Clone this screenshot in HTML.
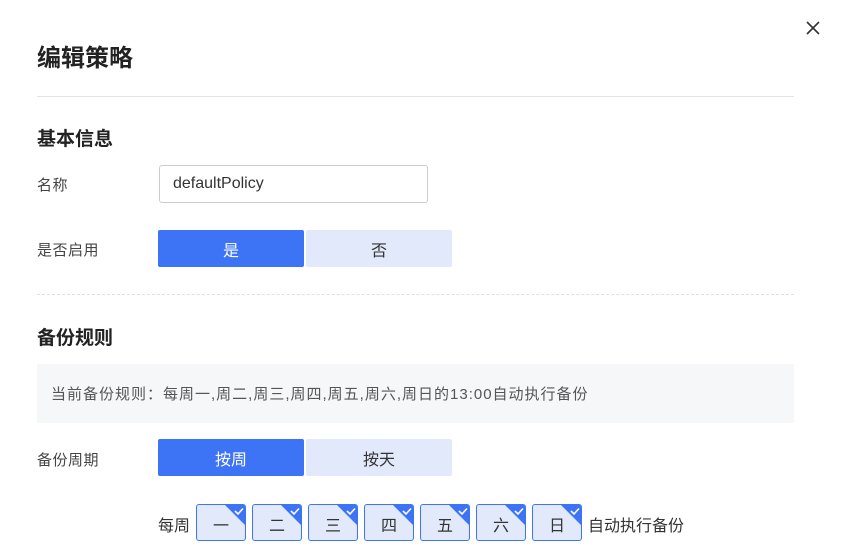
<!DOCTYPE html>
<html><head><meta charset="utf-8"><style>
*{margin:0;padding:0;box-sizing:border-box}
body{width:844px;height:557px;background:#fff;font-family:"Liberation Sans","Noto Sans CJK SC",sans-serif;color:#333;position:relative;overflow:hidden}
.a{position:absolute}
.t{font-size:24px;font-weight:bold;left:37px;top:38px;color:#222}
.h{font-size:19px;font-weight:bold;color:#222;left:37px}
.l{font-size:15px;color:#444;left:37px;letter-spacing:0.5px}
.btn{position:absolute;height:37px;display:flex;align-items:center;justify-content:center;font-size:16px;border-radius:2px}
.on{background:#3d74f5;color:#fff}
.off{background:#e2e9fb;color:#333}
.d{position:absolute;top:504px;width:50px;height:37px;border:1px solid #3d74f5;border-radius:3px;background:#e2e9fb;display:flex;align-items:center;justify-content:center;font-size:16px;color:#333;overflow:hidden;padding-top:2px}
.d svg{position:absolute;right:0;top:0}
</style></head><body>
<svg class="a" style="left:805px;top:20px" width="16" height="16" viewBox="0 0 16 16"><path d="M2 2L14 14M14 2L2 14" stroke="#333" stroke-width="1.6"/></svg>
<div class="a t">编辑策略</div>
<div class="a" style="left:37px;top:96px;width:757px;height:1px;background:#e4e4e4"></div>
<div class="a h" style="top:124px">基本信息</div>
<div class="a l" style="top:174px">名称</div>
<div class="a" style="left:159px;top:165px;width:269px;height:38px;border:1px solid #ccc;border-radius:3px;font-size:16px;padding:9px 0 0 13px;color:#333">defaultPolicy</div>
<div class="a l" style="top:239px">是否启用</div>
<div class="btn on" style="left:158px;top:230px;width:146px">是</div>
<div class="btn off" style="left:306px;top:230px;width:146px">否</div>
<div class="a" style="left:37px;top:294px;width:757px;border-top:1px dashed #e0e0e0"></div>
<div class="a h" style="top:323px">备份规则</div>
<div class="a" style="left:37px;top:364px;width:757px;height:59px;background:#f6f7f9;font-size:15px;color:#555;padding:19px 0 0 14px;letter-spacing:1px">当前备份规则：每周一,周二,周三,周四,周五,周六,周日的13:00自动执行备份</div>
<div class="a l" style="top:449px">备份周期</div>
<div class="btn on" style="left:158px;top:439px;width:146px">按周</div>
<div class="btn off" style="left:306px;top:439px;width:146px">按天</div>
<div class="a" style="left:158px;top:512px;font-size:16px;color:#333">每周</div>
<div class="d" style="left:196px">一<svg width="20" height="20"><path d="M0 0H20V20Z" fill="#3d74f5"/><path d="M10 6L13 9L18 3.5" stroke="#fff" stroke-width="1.6" fill="none"/></svg></div>
<div class="d" style="left:252px">二<svg width="20" height="20"><path d="M0 0H20V20Z" fill="#3d74f5"/><path d="M10 6L13 9L18 3.5" stroke="#fff" stroke-width="1.6" fill="none"/></svg></div>
<div class="d" style="left:308px">三<svg width="20" height="20"><path d="M0 0H20V20Z" fill="#3d74f5"/><path d="M10 6L13 9L18 3.5" stroke="#fff" stroke-width="1.6" fill="none"/></svg></div>
<div class="d" style="left:364px">四<svg width="20" height="20"><path d="M0 0H20V20Z" fill="#3d74f5"/><path d="M10 6L13 9L18 3.5" stroke="#fff" stroke-width="1.6" fill="none"/></svg></div>
<div class="d" style="left:420px">五<svg width="20" height="20"><path d="M0 0H20V20Z" fill="#3d74f5"/><path d="M10 6L13 9L18 3.5" stroke="#fff" stroke-width="1.6" fill="none"/></svg></div>
<div class="d" style="left:476px">六<svg width="20" height="20"><path d="M0 0H20V20Z" fill="#3d74f5"/><path d="M10 6L13 9L18 3.5" stroke="#fff" stroke-width="1.6" fill="none"/></svg></div>
<div class="d" style="left:532px">日<svg width="20" height="20"><path d="M0 0H20V20Z" fill="#3d74f5"/><path d="M10 6L13 9L18 3.5" stroke="#fff" stroke-width="1.6" fill="none"/></svg></div>
<div class="a" style="left:588px;top:512px;font-size:16px;color:#333">自动执行备份</div>
</body></html>
